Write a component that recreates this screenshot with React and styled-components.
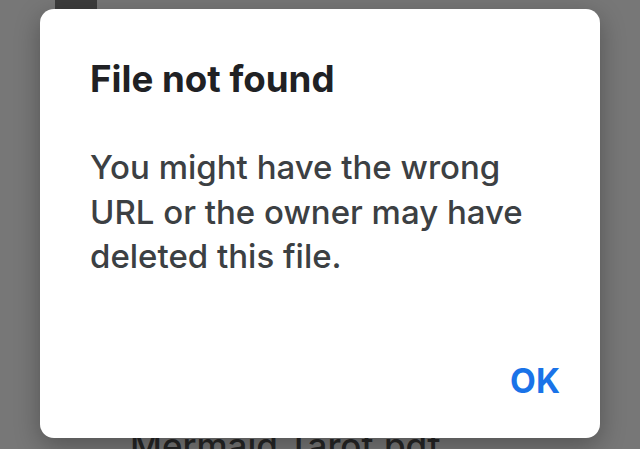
import React from 'react';
import styled, { createGlobalStyle } from 'styled-components';

const GlobalStyle = createGlobalStyle`
  html, body {
    margin: 0;
    padding: 0;
    background: #777777;
  }
  body {
    font-family: Inter, Roboto, sans-serif;
  }
`;

const Screen = styled.div`
  position: relative;
  width: 640px;
  height: 449px;
  overflow: hidden;
  background: #777777;
  display: flex;
  flex-direction: column;
`;

const TopBar = styled.div`
  display: flex;
  height: 9px;
  padding-left: 55px;
`;

const TopButton = styled.div`
  width: 42px;
  height: 100%;
  background: #3c3c3c;
`;

const FileRow = styled.div`
  margin-top: auto;
  padding-left: 130px;
  height: 22px;
  font-family: Inter, sans-serif;
  font-size: 35px;
  line-height: 36px;
  font-weight: 500;
  color: #262626;
  white-space: nowrap;
`;

const Dialog = styled.div`
  position: absolute;
  left: 40px;
  top: 9px;
  width: 560px;
  height: 429px;
  box-sizing: border-box;
  background: #ffffff;
  border-radius: 14px;
  box-shadow: 0 8px 26px rgba(0, 0, 0, 0.3);
  display: flex;
  flex-direction: column;
  padding: 48px 40px 37px 50px;
`;

const Title = styled.h2`
  margin: 0;
  font-size: 36.7px;
  line-height: 44px;
  font-weight: 700;
  color: #202124;
`;

const Message = styled.p`
  margin: 44px 0 0;
  font-size: 33px;
  line-height: 44.5px;
  font-weight: 500;
  color: #3c4043;
`;

const Actions = styled.div`
  margin-top: auto;
  display: flex;
  justify-content: flex-end;
`;

const TextButton = styled.button`
  border: none;
  background: none;
  padding: 0;
  font-family: inherit;
  font-size: 33.5px;
  line-height: 40px;
  font-weight: 700;
  color: #1a73e8;
`;

export default function App() {
  return (
    <>
      <GlobalStyle />
      <Screen>
        <TopBar>
          <TopButton />
        </TopBar>
        <FileRow>Mermaid Tarot.pdf</FileRow>
        <Dialog>
          <Title>File not found</Title>
          <Message>
            You might have the wrong
            <br />
            URL or the owner may have
            <br />
            deleted this file.
          </Message>
          <Actions>
            <TextButton>OK</TextButton>
          </Actions>
        </Dialog>
      </Screen>
    </>
  );
}
